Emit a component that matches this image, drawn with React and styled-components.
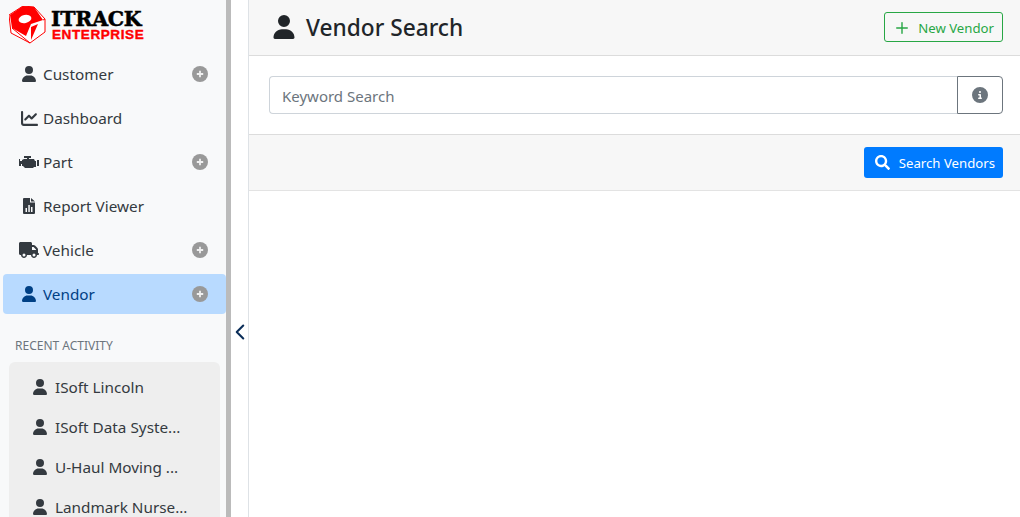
import React from 'react';
import styled, { createGlobalStyle } from 'styled-components';
import { FaUser, FaChartLine, FaTruck, FaCircleInfo } from 'react-icons/fa6';
import { FaSearch } from 'react-icons/fa';
import { ChevronLeft, Plus } from 'lucide-react';

const Global = createGlobalStyle`
  html, body {
    margin: 0;
    height: 100%;
    overflow: hidden;
    background: #fff;
    font-family: "Noto Sans", "Open Sans", sans-serif;
  }
  * { box-sizing: border-box; }
`;
const Page = styled.div`
  display: flex;
  width: 100%;
  height: 100vh;
  overflow: hidden;
`;
const Sidebar = styled.aside`
  width: 231px;
  flex: none;
  height: 100%;
  overflow: hidden;
  background: #f8f9fa;
  border-right: 5px solid #bbb;
`;
const LogoWrap = styled.div`
  height: 54px;
  display: flex;
  align-items: flex-start;
  gap: 5px;
  padding: 6px 0 0 9px;
`;
const LogoText = styled.div`
  display: flex;
  flex-direction: column;
  padding-top: 3px;
`;
const LogoTop = styled.span`
  font-family: "DejaVu Serif", serif;
  font-weight: 700;
  font-size: 20.5px;
  line-height: 20px;
  letter-spacing: -0.25px;
  color: #000;
  -webkit-text-stroke: 0.5px #000;
`;
const LogoBottom = styled.span`
  font-family: "Liberation Sans", sans-serif;
  font-weight: 700;
  font-size: 13.5px;
  line-height: 12px;
  letter-spacing: 0.6px;
  padding-left: 1px;
  color: #f00;
  -webkit-text-stroke: 0.4px #f00;
`;
const Nav = styled.nav`
  display: flex;
  flex-direction: column;
  gap: 4px;
  padding-left: 3px;
`;
const NavItem = styled.div`
  height: 40px;
  display: flex;
  align-items: center;
  gap: 4px;
  padding: 0 18px 0 16px;
  border-radius: 4px;
  font-size: 15.3px;
  color: ${(p) => (p.$active ? '#004085' : '#343a40')};
  background: ${(p) => (p.$active ? '#b8daff' : 'transparent')};
`;
const IconSlot = styled.span`
  width: 20px;
  flex: none;
  display: flex;
  justify-content: center;
  align-items: center;
`;
const NavLabel = styled.span`
  flex: 1;
`;
const RecentTitle = styled.div`
  margin-top: 24px;
  padding-left: 15px;
  font-size: 12px;
  line-height: 16px;
  color: #6c757d;
  text-transform: uppercase;
`;
const RecentCard = styled.div`
  margin: 8px 6px 0 9px;
  padding: 5px 0 0 23px;
  background: #eee;
  border-radius: 6px 6px 0 0;
`;
const RecentRow = styled.div`
  height: 40px;
  display: flex;
  align-items: center;
  gap: 7px;
  font-size: 15.3px;
  color: #343a40;
`;
const ToggleStrip = styled.div`
  width: 18px;
  flex: none;
  height: 100%;
  display: flex;
  justify-content: center;
  padding-top: 319px;
  border-right: 1px solid #dee2e6;
  color: #0b2e59;
`;
const CollapseIcon = styled(ChevronLeft)`
  flex: none;
`;
const Main = styled.main`
  flex: 1;
  min-width: 0;
  display: flex;
  flex-direction: column;
`;
const Header = styled.header`
  height: 56px;
  display: flex;
  align-items: center;
  justify-content: space-between;
  padding: 0 17px 1px 23px;
  background: #f7f7f7;
  border-bottom: 1px solid #dcdcdc;
`;
const Title = styled.h1`
  margin: 0;
  display: flex;
  align-items: center;
  gap: 10px;
  font-size: 22.7px;
  font-weight: 500;
  color: #212529;
`;
const OutlineButton = styled.button`
  height: 30px;
  display: flex;
  align-items: center;
  gap: 7px;
  padding: 1px 8px 0 8px;
  font: inherit;
  font-size: 13.2px;
  color: #28a745;
  background: transparent;
  border: 1px solid #28a745;
  border-radius: 3px;
`;
const SearchBar = styled.div`
  height: 79px;
  display: flex;
  align-items: center;
  padding: 0 17px 1px 20px;
  border-bottom: 1px solid #dcdcdc;
`;
const KeywordInput = styled.input`
  flex: 1;
  min-width: 0;
  height: 38px;
  padding: 2px 12px 0;
  font: inherit;
  font-size: 15px;
  color: #495057;
  background: #fff;
  border: 1px solid #ced4da;
  border-right: 0;
  border-radius: 4px 0 0 4px;
  &::placeholder {
    color: #6c757d;
    opacity: 1;
  }
`;
const InfoButton = styled.button`
  width: 46px;
  height: 38px;
  display: flex;
  align-items: center;
  justify-content: center;
  padding: 0;
  color: #6c757d;
  background: transparent;
  border: 1px solid #6c757d;
  border-radius: 0 4px 4px 0;
`;
const ActionBar = styled.div`
  height: 56px;
  display: flex;
  align-items: center;
  justify-content: flex-end;
  padding: 0 17px 1px 0;
  background: #f7f7f7;
  border-bottom: 1px solid #e3e3e3;
`;
const PrimaryButton = styled.button`
  height: 31px;
  display: flex;
  align-items: center;
  gap: 9px;
  padding: 1px 8px 0 11px;
  font: inherit;
  font-size: 13.2px;
  color: #fff;
  background: #007bff;
  border: 0;
  border-radius: 3px;
`;

function LogoMark() {
  return (
    <svg width="37" height="38" viewBox="0 0 37 38" aria-hidden="true">
      <path
        d="M14 0 L25 1 L36 13 L36 26 L21 37 L2 27 L0 9 Z"
        fill="#fff"
        stroke="#f00"
        strokeWidth="1"
      />
      <path d="M14 0 L25 1 L34 14 L22 18 L17 30 L3 22 L1 9 Z" fill="#f00" />
      <ellipse cx="16" cy="13" rx="6.5" ry="4" fill="#fff" transform="rotate(-12 16 13)" />
      <path d="M22 21 L29 18 L22 34 Z" fill="#f00" />
      <path d="M3 22 L21 37 M34 14 L36 13" stroke="#f00" strokeWidth="1" fill="none" />
    </svg>
  );
}

function EngineIcon() {
  return (
    <svg width="20" height="13" viewBox="0 0 20 13" aria-hidden="true">
      <path
        fill="currentColor"
        d="M5 0h7v2h-2v1h5l1 2h1v6h-2l-1 1H6L4 10H3V8H2v2H0V3h1v2h2V4l2-1h3V2H5zM18 4h2v6h-2z"
      />
    </svg>
  );
}

function ReportIcon() {
  return (
    <svg width="12" height="16" viewBox="0 0 12 16" aria-hidden="true">
      <path
        fill="currentColor"
        fillRule="evenodd"
        d="M1 0h6v4.5h5V15a1 1 0 0 1-1 1H1a1 1 0 0 1-1-1V1a1 1 0 0 1 1-1zM8 0l4 3.5H8zM2.5 10v4h1.5v-4zM5.3 7v7h1.5V7zM8 9v5h1.5V9z"
      />
    </svg>
  );
}

function ExpandIcon() {
  return (
    <svg width="16" height="16" viewBox="0 0 16 16" aria-hidden="true">
      <circle cx="8" cy="8" r="8" fill="#999" />
      <path d="M8 4.8v6.4M4.8 8h6.4" stroke="#f0f0f0" strokeWidth="1.8" />
    </svg>
  );
}

const navItems = [
  { label: 'Customer', icon: <FaUser size={16} />, expand: true },
  { label: 'Dashboard', icon: <FaChartLine size={17} /> },
  { label: 'Part', icon: <EngineIcon />, expand: true },
  { label: 'Report Viewer', icon: <ReportIcon /> },
  { label: 'Vehicle', icon: <FaTruck size={20} />, expand: true },
  { label: 'Vendor', icon: <FaUser size={16} />, expand: true, active: true },
];

const recent = ['ISoft Lincoln', 'ISoft Data Syste...', 'U-Haul Moving ...', 'Landmark Nurse...'];

export default function App() {
  return (
    <Page>
      <Global />
      <Sidebar>
        <LogoWrap>
          <LogoMark />
          <LogoText>
            <LogoTop>ITRACK</LogoTop>
            <LogoBottom>ENTERPRISE</LogoBottom>
          </LogoText>
        </LogoWrap>
        <Nav>
          {navItems.map((item) => (
            <NavItem key={item.label} $active={item.active}>
              <IconSlot>{item.icon}</IconSlot>
              <NavLabel>{item.label}</NavLabel>
              {item.expand && <ExpandIcon />}
            </NavItem>
          ))}
        </Nav>
        <RecentTitle>Recent Activity</RecentTitle>
        <RecentCard>
          {recent.map((name) => (
            <RecentRow key={name}>
              <FaUser size={16} />
              <span>{name}</span>
            </RecentRow>
          ))}
        </RecentCard>
      </Sidebar>
      <ToggleStrip>
        <CollapseIcon size={26} strokeWidth={1.9} />
      </ToggleStrip>
      <Main>
        <Header>
          <Title>
            <FaUser size={24} />
            Vendor Search
          </Title>
          <OutlineButton>
            <Plus size={18} strokeWidth={1.9} />
            New Vendor
          </OutlineButton>
        </Header>
        <SearchBar>
          <KeywordInput placeholder="Keyword Search" />
          <InfoButton>
            <FaCircleInfo size={16} />
          </InfoButton>
        </SearchBar>
        <ActionBar>
          <PrimaryButton>
            <FaSearch size={15} />
            Search Vendors
          </PrimaryButton>
        </ActionBar>
      </Main>
    </Page>
  );
}
